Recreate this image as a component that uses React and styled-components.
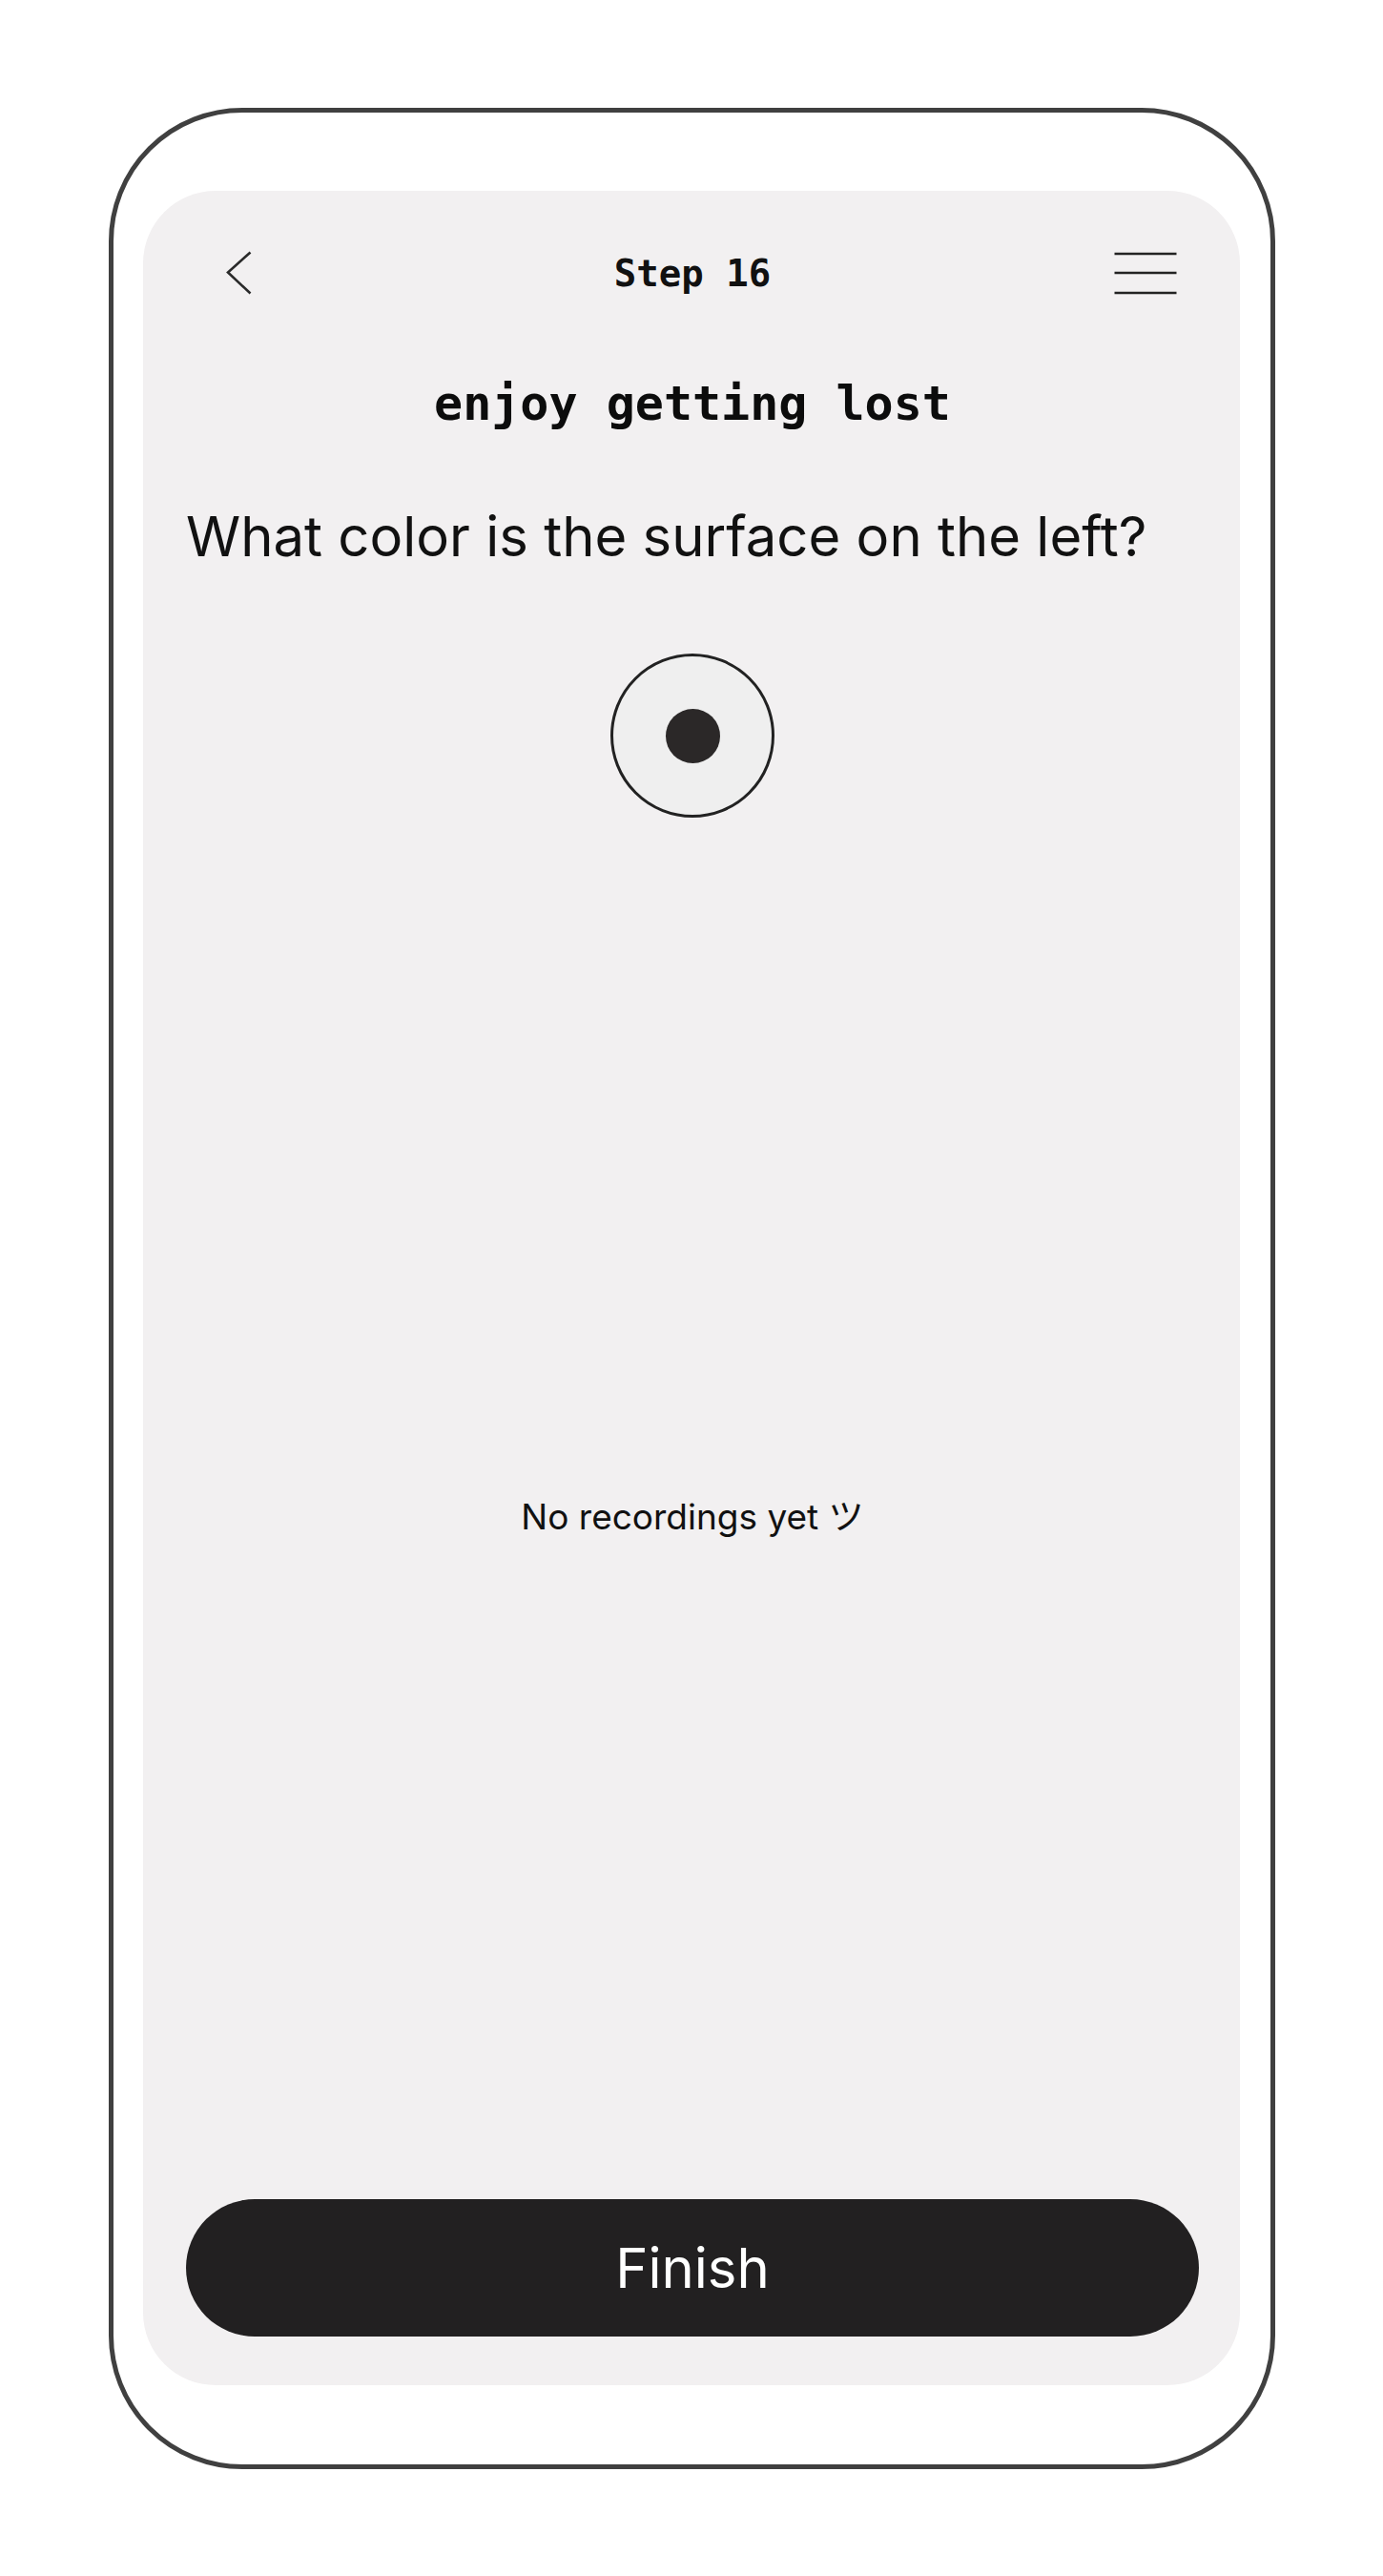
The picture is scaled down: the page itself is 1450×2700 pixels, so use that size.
import styled, { createGlobalStyle } from "styled-components";

const GlobalStyle = createGlobalStyle`
    body {
        margin: 0;
        background: #ffffff;
    }
`

const BackIcon = () => (
    <svg width="27" height="46" viewBox="0 0 27 46" fill="none">
        <polyline points="25.5,1.5 2,22.5 25.5,44.5" stroke="#2a2a2a" strokeWidth="2.6" />
    </svg>
)

const MenuIcon = () => (
    <svg width="66" height="46" viewBox="0 0 66 46" fill="none">
        <line x1="0.5" y1="3" x2="65.5" y2="3" stroke="#232323" strokeWidth="2.6" />
        <line x1="0.5" y1="23" x2="65.5" y2="23" stroke="#232323" strokeWidth="2.6" />
        <line x1="0.5" y1="44" x2="65.5" y2="44" stroke="#232323" strokeWidth="2.6" />
    </svg>
)

const App = () => {
    return (
        <Stage>
            <GlobalStyle />
            <Phone>
                <Screen>
                    <Header>
                        <IconButton $side="left" aria-label="Back"><BackIcon /></IconButton>
                        <StepLabel>Step 16</StepLabel>
                        <IconButton $side="right" aria-label="Menu"><MenuIcon /></IconButton>
                    </Header>

                    <Title>enjoy getting lost</Title>
                    <Question>What color is the surface on the left?</Question>

                    <RecordButton aria-label="Record">
                        <RecordDot />
                    </RecordButton>

                    <Recordings>
                        <EmptyText>No recordings yet ツ</EmptyText>
                    </Recordings>

                    <FinishButton>Finish</FinishButton>
                </Screen>
            </Phone>
        </Stage>
    )
}

const Stage = styled.div`
    display: flex;
    padding: 113px 0 0 114px;
`
const Phone = styled.div`
    box-sizing: border-box;
    width: 1223px;
    height: 2475px;
    border: 5px solid #404040;
    border-radius: 140px;
    padding: 82px 32px 83px 31px;
    display: flex;
`
const Screen = styled.div`
    box-sizing: border-box;
    flex: 1;
    display: flex;
    flex-direction: column;
    background-color: #f2f0f1;
    border-radius: 76px;
    padding: 56px 43px 51px 45px;
`
const Header = styled.div`
    display: grid;
    grid-template-columns: 1fr auto 1fr;
    align-items: center;
    height: 60px;
`
const IconButton = styled.div`
    display: flex;
    justify-content: ${props => props.$side === "left" ? "flex-start" : "flex-end"};
    margin-left: ${props => props.$side === "left" ? "42px" : "0"};
    margin-right: ${props => props.$side === "right" ? "23px" : "0"};
`
const StepLabel = styled.div`
    font-family: "DejaVu Sans Mono", monospace;
    font-weight: 700;
    font-size: 39px;
    color: #111;
`
const Title = styled.h1`
    margin: 77px 0 0;
    text-align: center;
    font-family: "DejaVu Sans Mono", monospace;
    font-weight: 700;
    font-size: 50px;
    line-height: 60px;
    color: #0c0c0c;
`
const Question = styled.p`
    margin: 74px 0 0;
    font-family: Inter, "Noto Sans", sans-serif;
    font-weight: 400;
    font-size: 58px;
    line-height: 70px;
    color: #111;
`
const RecordButton = styled.div`
    box-sizing: border-box;
    align-self: center;
    margin-top: 88px;
    width: 172px;
    height: 172px;
    border-radius: 50%;
    border: 3.5px solid #222;
    background-color: #efefef;
    display: flex;
    align-items: center;
    justify-content: center;
`
const RecordDot = styled.div`
    width: 57px;
    height: 57px;
    border-radius: 50%;
    background-color: #2b2828;
`
const Recordings = styled.div`
    flex: 1;
    display: flex;
    align-items: center;
    justify-content: center;
    padding-top: 12px;
`
const EmptyText = styled.p`
    margin: 0;
    font-family: Inter, "Noto Sans CJK JP", sans-serif;
    font-size: 37px;
    color: #111;
`
const FinishButton = styled.button`
    height: 144px;
    width: 100%;
    border: none;
    border-radius: 72px;
    background-color: #222021;
    color: #ffffff;
    font-family: Inter, "Noto Sans", sans-serif;
    font-weight: 400;
    font-size: 58px;
    padding: 0;
`

export default App
